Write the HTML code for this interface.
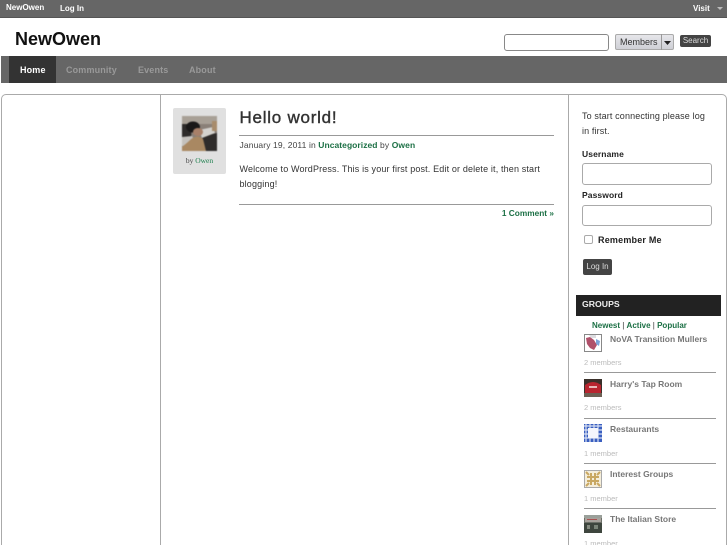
<!DOCTYPE html>
<html><head><meta charset="utf-8"><title>NewOwen</title>
<style>
html,body{margin:0;padding:0;background:#fff;width:727px;height:545px;overflow:hidden}
#w{position:absolute;left:0;top:0;width:727px;height:545px;overflow:hidden;font-family:"Liberation Sans",sans-serif;color:#333}
.a{position:absolute;white-space:nowrap}
.g{color:#1c7045;font-weight:bold}
.hr{position:absolute;height:1px;background:#999}
.inp{position:absolute;box-sizing:border-box;background:#fff;border:1px solid #aaa;border-radius:3px}
.n{font-size:8.5px;font-weight:bold;color:#777;left:610px}
.m{font-size:7.5px;color:#bbb;left:584px}
.t{position:absolute;left:584px;width:18px;height:18px;filter:blur(.3px)}
.nv{top:64px;font-size:9px;font-weight:bold;color:#999;line-height:12px;letter-spacing:.15px}
</style></head><body><div id="w">
<div class="a" style="left:0;top:0;width:727px;height:17.5px;background:#666;border-bottom:1px solid #555;box-sizing:border-box"></div>
<div class="a" style="left:6px;top:3px;font-size:8px;font-weight:bold;color:#fff;line-height:10px">NewOwen</div>
<div class="a" style="left:60px;top:3px;font-size:8px;font-weight:bold;color:#fff;line-height:11px">Log In</div>
<div class="a" style="left:693px;top:3px;font-size:8px;font-weight:bold;color:#fff;line-height:11px">Visit</div>
<svg class="a" style="left:717px;top:7px" width="6" height="3"><path d="M0 0H6L3 3Z" fill="#bbb"/></svg>

<div class="a" style="left:15px;top:27px;font-size:18px;font-weight:bold;color:#111;line-height:24px">NewOwen</div>

<div class="inp" style="left:504px;top:34px;width:105px;height:17px;border-color:#888"></div>
<div class="a" style="left:615px;top:34px;width:59px;height:16px;box-sizing:border-box;background:linear-gradient(#e6e6ea,#cfd0d6);border:1px solid #aaa;border-radius:2px"></div>
<div class="a" style="left:661px;top:34px;width:1px;height:16px;background:#999"></div>
<div class="a" style="left:620px;top:36px;font-size:9px;color:#333;line-height:13px">Members</div>
<svg class="a" style="left:664px;top:41px" width="7" height="4"><path d="M0 0H7L3.5 4Z" fill="#222"/></svg>
<div class="a" style="left:680px;top:35px;width:31px;height:12px;background:#444;border-radius:2px;color:#ddd;font-size:8px;line-height:11px;text-align:center">Search</div>

<div class="a" style="left:1px;top:56px;width:726px;height:27px;background:#666"></div>
<div class="a" style="left:9px;top:56px;width:47px;height:27px;background:#333"></div>
<div class="a nv" style="left:20px;color:#fff">Home</div>
<div class="a nv" style="left:66px">Community</div>
<div class="a nv" style="left:138px">Events</div>
<div class="a nv" style="left:189px">About</div>

<div class="a" style="left:1px;top:94px;width:726px;height:470px;box-sizing:border-box;border:1px solid #aaa;border-radius:5px"></div>
<div class="a" style="left:160px;top:94px;width:1px;height:451px;background:#aaa"></div>
<div class="a" style="left:568px;top:94px;width:1px;height:451px;background:#aaa"></div>

<div class="a" style="left:173px;top:108px;width:53px;height:66px;background:#e0e0e0;border-radius:2px"></div>
<svg class="a" style="left:182px;top:116px;filter:blur(.5px)" width="35" height="35" viewBox="0 0 35 35">
<rect width="35" height="35" fill="#8a8078"/><rect y="0" width="35" height="8" fill="#a8a096"/>
<path d="M0 8H10L9 22L0 24Z" fill="#2e2b2a"/>
<path d="M20 20L35 17V35H22Z" fill="#2f2c2b"/>
<path d="M17 14L31 11L33 17L20 22Z" fill="#d4d2ce"/>
<path d="M0 21L10 20L13 25L4 30L0 30Z" fill="#c4c1bd"/>
<ellipse cx="11" cy="11" rx="7" ry="5.5" fill="#1a1818"/><ellipse cx="16" cy="16" rx="5" ry="4" fill="#a88069"/>
<path d="M6 26Q14 17 21 23L24 35H0V31Z" fill="#a98862"/>
<rect x="30" y="5" width="5" height="10" fill="#a88c6c"/>
</svg>
<div class="a" style="left:173px;top:155px;width:53px;text-align:center;font-family:'Liberation Serif',serif;font-size:7.5px;line-height:11px;color:#444">by <span style="color:#1c7f4c">Owen</span></div>

<div class="a" style="left:239.5px;top:107px;font-size:17px;color:#333;line-height:22px;letter-spacing:.75px;-webkit-text-stroke:.4px #333">Hello world!</div>
<div class="hr" style="left:239px;top:135px;width:315px"></div>
<div class="a" style="left:239.5px;top:139px;font-size:8.5px;line-height:12px;letter-spacing:.12px;color:#444">January 19, 2011 in <span class="g" style="letter-spacing:.05px">Uncategorized</span> by <span class="g">Owen</span></div>
<div class="a" style="left:239.5px;top:162px;font-size:9px;line-height:14.5px;letter-spacing:.15px;color:#333">Welcome to WordPress. This is your first post. Edit or delete it, then start<br>blogging!</div>
<div class="hr" style="left:239px;top:204px;width:315px"></div>
<div class="a g" style="right:173px;top:208px;font-size:8.3px;line-height:11px">1 Comment »</div>

<div class="a" style="left:582px;top:109px;font-size:9px;line-height:14.5px;letter-spacing:.13px;color:#333">To start connecting please log<br>in first.</div>
<div class="a" style="left:582px;top:149px;font-size:8.5px;font-weight:bold;line-height:11px;letter-spacing:.1px;color:#222">Username</div>
<div class="inp" style="left:582px;top:163px;width:130px;height:22px"></div>
<div class="a" style="left:582px;top:190px;font-size:8.5px;font-weight:bold;line-height:11px;letter-spacing:.1px;color:#222">Password</div>
<div class="inp" style="left:582px;top:205px;width:130px;height:21px"></div>
<div class="inp" style="left:584px;top:235px;width:9px;height:9px;border-radius:2px"></div>
<div class="a" style="left:598px;top:234px;font-size:9px;font-weight:bold;line-height:12px;letter-spacing:.2px;color:#222">Remember Me</div>
<div class="a" style="left:583px;top:259px;width:29px;height:16px;background:#444;border-radius:2px;color:#ddd;font-size:8px;line-height:16px;text-align:center">Log In</div>

<div class="a" style="left:576px;top:295px;width:145px;height:21px;background:#222"></div>
<div class="a" style="left:582px;top:298px;font-size:8.7px;font-weight:bold;color:#eee;line-height:13px">GROUPS</div>
<div class="a" style="left:592px;top:320px;font-size:8px;line-height:11px;color:#333"><span class="g">Newest</span> | <span class="g">Active</span> | <span class="g">Popular</span></div>

<svg class="t" style="top:334px" viewBox="0 0 18 18"><rect x=".5" y=".5" width="17" height="17" fill="#fff" stroke="#888"/><path d="M2 4L6 3L10 6L13 11L10 16L6 14L3 10Z" fill="#b0506a"/><path d="M12 5L16 7L15 12L12 10Z" fill="#7da3d8"/><path d="M5 1H12V4H7Z" fill="#dcdce0"/></svg>
<div class="a n" style="top:333px;line-height:12px">NoVA Transition Mullers</div>
<div class="a m" style="top:358px;line-height:10px">2 members</div>
<div class="hr" style="left:584px;top:372px;width:132px"></div>

<svg class="t" style="top:379px" viewBox="0 0 18 18"><rect width="18" height="18" fill="#3a302a"/><path d="M1 6Q9 0 17 6V14H1Z" fill="#b8252f"/><rect x="0" y="14" width="18" height="4" fill="#6c6054"/><rect x="5" y="7" width="8" height="2" fill="#e8b8b8"/></svg>
<div class="a n" style="top:378px;line-height:12px">Harry's Tap Room</div>
<div class="a m" style="top:403px;line-height:10px">2 members</div>
<div class="hr" style="left:584px;top:418px;width:132px"></div>

<svg class="t" style="top:424px" viewBox="0 0 18 18"><rect width="18" height="18" fill="#3a5fc0"/><path d="M0 2H18M0 6H18M0 10H18M0 14H18M2 0V18M6 0V18M10 0V18M14 0V18" stroke="#fff" stroke-width="1.2" opacity=".8"/><rect x="4" y="4" width="10" height="10" fill="#f4f6fc"/></svg>
<div class="a n" style="top:423px;line-height:12px">Restaurants</div>
<div class="a m" style="top:449px;line-height:10px">1 member</div>
<div class="hr" style="left:584px;top:463px;width:132px"></div>

<svg class="t" style="top:470px" viewBox="0 0 18 18"><rect x=".5" y=".5" width="17" height="17" fill="#f5eedb" stroke="#aaa"/><path d="M7 3V15M11 3V15M3 7H15M3 11H15M2 2L5 5M16 2L13 5M2 16L5 13M16 16L13 13" stroke="#c9a862" stroke-width="2"/></svg>
<div class="a n" style="top:468px;line-height:12px">Interest Groups</div>
<div class="a m" style="top:494px;line-height:10px">1 member</div>
<div class="hr" style="left:584px;top:508px;width:132px"></div>

<svg class="t" style="top:515px" viewBox="0 0 18 18"><rect width="18" height="18" fill="#6c7068"/><rect y="0" width="18" height="3" fill="#9aa09a"/><rect x="1" y="3" width="16" height="4" fill="#a8a29c"/><rect x="3" y="4" width="10" height="1" fill="#a85050"/><rect y="8" width="18" height="10" fill="#3e463e"/><rect x="3" y="10" width="3" height="4" fill="#848a80"/><rect x="10" y="10" width="4" height="4" fill="#7a8478"/></svg>
<div class="a n" style="top:513px;line-height:12px">The Italian Store</div>
<div class="a m" style="top:539px;line-height:10px">1 member</div>
</div></body></html>
